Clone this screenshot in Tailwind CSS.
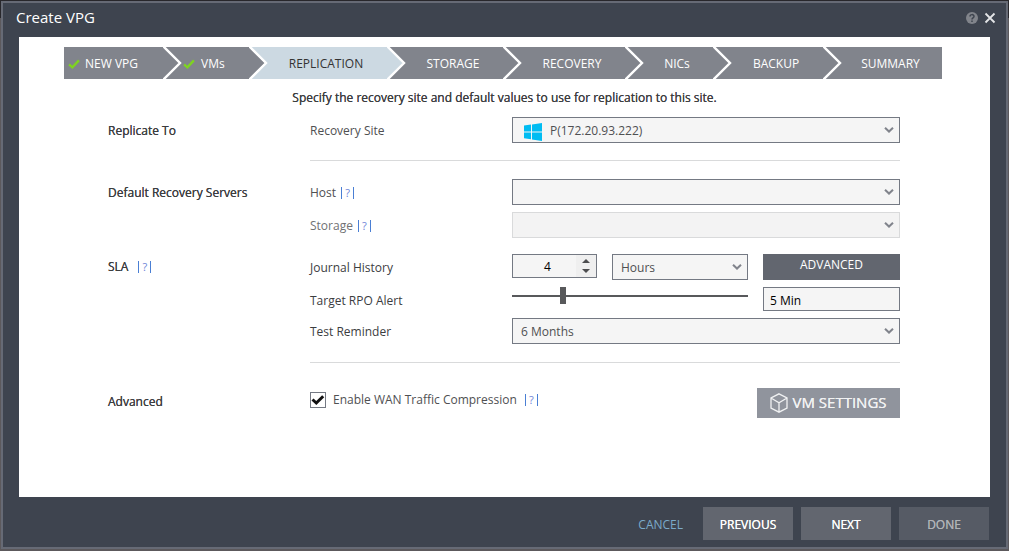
<!doctype html>
<html lang="en">
  <head>
    <meta charset="UTF-8" />
    <meta name="viewport" content="width=device-width, initial-scale=1.0" />
    <title>Create VPG</title>
    <script src="https://cdn.jsdelivr.net/npm/@tailwindcss/browser@4"></script>
  </head>
  <body
    class="flex min-h-screen flex-col bg-[linear-gradient(#28272b_18px,#5c595c_18px)] px-px pt-px pb-0.5 font-['Open_Sans',sans-serif] text-xs text-[#4f5052]"
  >
    <svg class="hidden">
      <symbol id="chevron" viewBox="0 0 10 7">
        <path d="M1 1.2 5 5 9 1.2" fill="none" stroke="#81848c" stroke-width="2" />
      </symbol>
      <symbol id="arrow" viewBox="0 0 20 32">
        <path d="M0 0 16 16 0 32z" fill="currentColor" />
        <path d="M-1-2 17 16-1 34" fill="none" stroke="#fff" stroke-width="2.4" />
      </symbol>
      <symbol id="done" viewBox="0 0 11 9">
        <path d="M1 4.8 4 7.5 10 1.2" fill="none" stroke="#7ed321" stroke-width="2.2" />
      </symbol>
    </svg>

    <div
      role="dialog"
      aria-labelledby="dialog-title"
      class="flex grow flex-col border-2 border-[#666a75] bg-[#3e444f] px-4"
    >
      <header class="flex h-[34px] items-center justify-between pb-1.5 text-white">
        <h1 id="dialog-title" class="-ml-[3px] text-[15px]">Create VPG</h1>
        <div class="-mr-[7px] flex items-center gap-1 pt-0.5">
          <button type="button" aria-label="Help">
            <svg class="size-3.5" viewBox="0 0 14 14">
              <circle cx="7" cy="7" r="6" fill="#81848b" />
              <path
                d="M5 5.6C5 3 9 3 9 5.4 9 6.8 7 6.8 7 8.4M7 9.4V11"
                fill="none"
                stroke="#3e444f"
                stroke-width="1.5"
              />
            </svg>
          </button>
          <button type="button" aria-label="Close">
            <svg class="size-3.5" viewBox="0 0 14 14">
              <path d="M2.5 2.5 11.5 11.5M11.5 2.5 2.5 11.5" stroke="#e4e5e7" stroke-width="1.8" />
            </svg>
          </button>
        </div>
      </header>

      <main class="grow bg-white pt-2.5">
        <ol
          class="mr-12 ml-[45px] grid h-8 grid-cols-[99fr_86fr_138fr_116fr_122fr_88fr_110fr_119fr] bg-[#81848c] text-white"
        >
          <li class="flex items-center gap-[5px] pt-px pl-1">
            <svg class="h-2.5 w-3"><use href="#done" /></svg>
            NEW VPG
          </li>
          <li class="relative flex items-center gap-1.5 pt-px pl-5">
            <svg class="absolute top-0 left-0 h-8 w-5 text-[#81848c]"><use href="#arrow" /></svg>
            <svg class="h-2.5 w-3"><use href="#done" /></svg>
            VMs
          </li>
          <li
            aria-current="step"
            class="relative flex items-center justify-center bg-[#ccd9e2] pt-0.5 pl-4 text-[#333]"
          >
            <svg class="absolute top-0 left-0 h-8 w-5 text-[#81848c]"><use href="#arrow" /></svg>
            REPLICATION
          </li>
          <li class="relative flex items-center justify-center pt-0.5 pl-4">
            <svg class="absolute top-0 left-0 h-8 w-5 text-[#ccd9e2]"><use href="#arrow" /></svg>
            STORAGE
          </li>
          <li class="relative flex items-center justify-center pt-0.5 pl-4">
            <svg class="absolute top-0 left-0 h-8 w-5 text-[#81848c]"><use href="#arrow" /></svg>
            RECOVERY
          </li>
          <li class="relative flex items-center justify-center pt-0.5 pl-4">
            <svg class="absolute top-0 left-0 h-8 w-5 text-[#81848c]"><use href="#arrow" /></svg>
            NICs
          </li>
          <li class="relative flex items-center justify-center pt-0.5 pl-4">
            <svg class="absolute top-0 left-0 h-8 w-5 text-[#81848c]"><use href="#arrow" /></svg>
            BACKUP
          </li>
          <li class="relative flex items-center justify-center pt-0.5 pl-4">
            <svg class="absolute top-0 left-0 h-8 w-5 text-[#81848c]"><use href="#arrow" /></svg>
            SUMMARY
          </li>
        </ol>

        <p class="mt-[11px] text-center text-[#3c3d3f] [text-shadow:0_0_0_#3c3d3f]">
          Specify the recovery site and default values to use for replication to this site.
        </p>

        <form class="mt-[11px] mr-[90px] ml-[89px]">
          <section class="grid grid-cols-[202px_1fr]">
            <h2 class="pt-1.5 text-[#3c3d3f] [text-shadow:0_0_0_#3c3d3f]">Replicate To</h2>
            <div class="grid grid-cols-[202px_1fr] items-center border-b border-[#d9dadb] pb-[17px]">
              <label for="site" class="pt-0.5">Recovery Site</label>
              <div class="relative">
                <svg class="absolute top-1.5 left-3 size-[18px]" viewBox="0 0 18 18" fill="#00bcf2">
                  <path d="M0 2.6 7 1.6V8.4H0zM8 1.4 18 0V8.4H8zM0 9.4H7V16.2L0 15.3zM8 9.4H18V18L8 16.4z" />
                </svg>
                <select
                  id="site"
                  class="h-[26px] w-full appearance-none border border-[#747983] bg-[#f5f5f5] pt-0.5 pl-[37px]"
                >
                  <option>P(172.20.93.222)</option>
                </select>
                <svg class="pointer-events-none absolute top-[9px] right-1.5 h-2 w-2.5"><use href="#chevron" /></svg>
              </div>
            </div>
          </section>

          <section class="mt-[18px] grid grid-cols-[202px_1fr]">
            <h2 class="pt-1.5 text-[#3c3d3f] [text-shadow:0_0_0_#3c3d3f]">Default Recovery Servers</h2>
            <div class="grid grid-cols-[202px_1fr] items-center gap-y-[7px]">
              <div class="flex items-center gap-[5px] pt-0.5">
                <label for="host">Host</label>
                <button
                  type="button"
                  aria-label="About host"
                  class="h-3 w-[13px] border-x border-[#4a7fd4] text-[11px] leading-3 text-[#6f86d8]"
                >?</button>
              </div>
              <div class="relative">
                <select
                  id="host"
                  class="block h-[26px] w-full appearance-none border border-[#747983] bg-[#f5f5f5] pl-2"
                ></select>
                <svg class="pointer-events-none absolute top-[9px] right-1.5 h-2 w-2.5"><use href="#chevron" /></svg>
              </div>
              <div class="flex items-center gap-[5px] pt-0.5 text-[#707174]">
                <label for="storage">Storage</label>
                <button
                  type="button"
                  aria-label="About storage"
                  class="h-3 w-[13px] border-x border-[#4a7fd4] text-[11px] leading-3 text-[#6f86d8]"
                >?</button>
              </div>
              <div class="relative">
                <select
                  id="storage"
                  disabled
                  class="block h-[26px] w-full appearance-none border border-[#d9dadb] bg-[#f3f3f3] pl-2"
                ></select>
                <svg class="pointer-events-none absolute top-[9px] right-1.5 h-2 w-2.5"><use href="#chevron" /></svg>
              </div>
            </div>
          </section>

          <section class="mt-4 grid grid-cols-[202px_1fr]">
            <div class="flex items-center gap-2.5 self-start pt-[5px]">
              <h2 class="text-[#3c3d3f] [text-shadow:0_0_0_#3c3d3f]">SLA</h2>
              <button
                type="button"
                aria-label="About SLA"
                class="h-3 w-[13px] border-x border-[#4a7fd4] text-[11px] leading-3 text-[#6f86d8]"
              >?</button>
            </div>
            <div
              class="grid grid-cols-[202px_1fr] items-center gap-y-[7px] border-b border-[#d9dadb] pb-[18px] text-[#3c3d3f]"
            >
              <label for="journal" class="pt-0.5">Journal History</label>
              <div class="flex items-start">
                <div class="flex h-6 w-[85px] border border-[#747983] bg-[#f5f5f5]">
                  <input
                    id="journal"
                    type="text"
                    inputmode="numeric"
                    value="4"
                    class="w-0 grow pt-0.5 pl-1.5 text-center text-black"
                  />
                  <div class="flex w-5 flex-col items-center justify-center gap-1.5 bg-[#efefef]">
                    <button type="button" aria-label="Increase">
                      <svg class="h-1 w-2" viewBox="0 0 8 4"><path d="M4 0 8 4H0z" fill="#4c4d4f" /></svg>
                    </button>
                    <button type="button" aria-label="Decrease">
                      <svg class="h-1 w-2" viewBox="0 0 8 4"><path d="M0 0H8L4 4z" fill="#4c4d4f" /></svg>
                    </button>
                  </div>
                </div>
                <div class="relative ml-[15px] w-34">
                  <select
                    aria-label="Journal history unit"
                    class="block h-[26px] w-full appearance-none border border-[#747983] bg-[#f5f5f5] pt-0.5 pl-2 text-[#4f5052]"
                  >
                    <option>Hours</option>
                  </select>
                  <svg class="pointer-events-none absolute top-[9px] right-1.5 h-2 w-2.5"><use href="#chevron" /></svg>
                </div>
                <button type="button" class="ml-[15px] h-[26px] grow bg-[#62666f] pb-1 text-white">
                  ADVANCED
                </button>
              </div>

              <label for="rpo" class="pt-1">Target RPO Alert</label>
              <div class="flex items-start">
                <input
                  id="rpo"
                  type="range"
                  value="21"
                  class="h-[17px] w-59 appearance-none bg-[linear-gradient(#58595b,#58595b)] bg-size-[100%_2px] bg-center bg-no-repeat [&::-webkit-slider-thumb]:h-[17px] [&::-webkit-slider-thumb]:w-1.5 [&::-webkit-slider-thumb]:appearance-none [&::-webkit-slider-thumb]:bg-[#58595b]"
                />
                <input
                  type="text"
                  aria-label="Target RPO alert value"
                  value="5 Min"
                  class="ml-[15px] h-6 w-0 grow border border-[#747983] bg-[#f5f5f5] px-1.5 pt-0.5 text-black"
                />
              </div>

              <label for="reminder" class="pt-0.5">Test Reminder</label>
              <div class="relative">
                <select
                  id="reminder"
                  class="block h-[26px] w-full appearance-none border border-[#747983] bg-[#f5f5f5] pt-0.5 pl-2 text-[#4f5052]"
                >
                  <option>6 Months</option>
                </select>
                <svg class="pointer-events-none absolute top-[9px] right-1.5 h-2 w-2.5"><use href="#chevron" /></svg>
              </div>
            </div>
          </section>

          <section class="mt-[25px] grid grid-cols-[202px_1fr]">
            <h2 class="pt-1.5 text-[#3c3d3f] [text-shadow:0_0_0_#3c3d3f]">Advanced</h2>
            <div class="flex items-start justify-between">
              <div class="flex items-center pt-1">
                <span class="relative mr-[7px] size-4">
                  <input
                    id="wan"
                    type="checkbox"
                    checked
                    class="block size-4 appearance-none border border-[#747983] bg-white"
                  />
                  <svg class="pointer-events-none absolute top-0 left-0 size-4" viewBox="0 0 16 16">
                    <path d="M2.5 7.5 6.3 11 13.2 4.2" fill="none" stroke="#111" stroke-width="3" />
                  </svg>
                </span>
                <label for="wan">Enable WAN Traffic Compression</label>
                <button
                  type="button"
                  aria-label="About WAN traffic compression"
                  class="ml-2 h-3 w-[13px] border-x border-[#4a7fd4] text-[11px] leading-3 text-[#6f86d8]"
                >?</button>
              </div>
              <button
                type="button"
                class="flex h-[30px] w-[143px] items-center justify-center gap-1 bg-[#90949d] text-[15px] text-[#f1f2f3] [text-shadow:0_0_0_#f1f2f3]"
              >
                <svg class="h-5 w-[18px]" viewBox="0 0 18 20" fill="none" stroke="currentColor" stroke-width="1.3">
                  <path d="M9 .8 17 5V15L9 19.2 1 15V5zM1 5 9 9.8 17 5M9 9.8V19.2" />
                </svg>
                <span class="pb-0.5">VM SETTINGS</span>
              </button>
            </div>
          </section>
        </form>
      </main>

      <footer class="mr-px flex justify-end gap-2 pt-2.5 pb-[7px] text-white">
        <button type="button" class="h-[33px] px-3 pt-0.5 text-[#7baac9]">CANCEL</button>
        <button type="button" class="h-[33px] w-[90px] bg-[#62666f] pt-0.5 [text-shadow:0_0_0_#fff]">PREVIOUS</button>
        <button type="button" class="h-[33px] w-[90px] bg-[#62666f] pt-0.5 [text-shadow:0_0_0_#fff]">NEXT</button>
        <button
          type="button"
          disabled
          class="h-[33px] w-[90px] bg-[#565b65] pt-0.5 text-[#b0b3b8] [text-shadow:0_0_0_#b0b3b8]"
        >DONE</button>
      </footer>
    </div>
  </body>
</html>
